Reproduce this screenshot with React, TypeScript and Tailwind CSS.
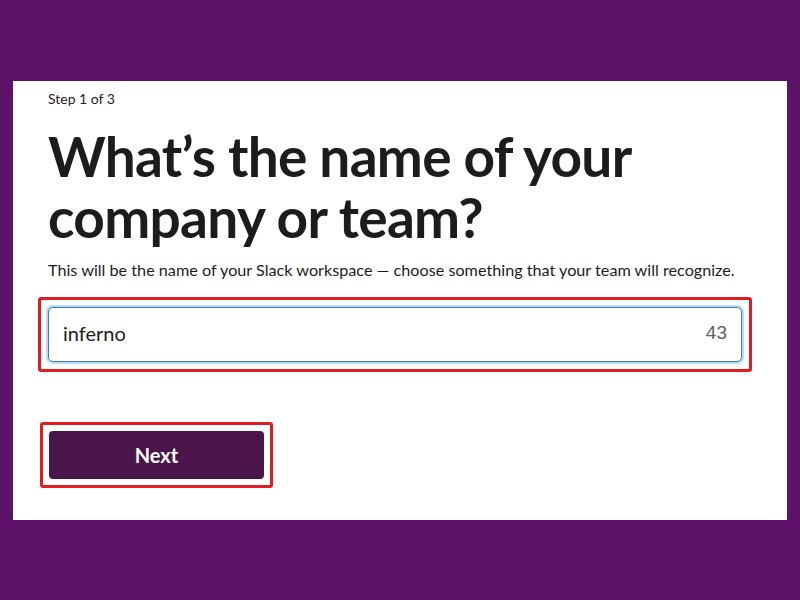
export default function App() {
  return (
    <div className="w-[800px] h-[600px] bg-[#5d1169] pt-[81px] px-[13px] font-['Lato',sans-serif]">
      <div className="w-[774px] h-[439px] bg-white pl-[35px] pr-[35px] pt-[9px] flex flex-col">
        <p className="text-[14px] leading-[18px] text-[#1d1c1d]">Step 1 of 3</p>
        <h1 className="mt-[18px] text-[55px] leading-[61px] font-bold tracking-[-0.7px] text-[#1d1c1d]">
          What’s the name of your company or team?
        </h1>
        <p className="mt-[12px] text-[16.2px] leading-[20px] text-[#1d1c1d]">
          This will be the name of your Slack workspace — choose something that your team will recognize.
        </p>
        {/* highlighted input */}
        <div className="mt-[17px] -ml-[10px] w-[714px] h-[75px] border-[3px] border-[#e31b23] rounded-[3px] p-[5px]">
          <div className="h-full rounded-[7px] border-[2px] border-[#b8dcf2] bg-[#cfe7f6]">
            <div className="h-full rounded-[5px] border border-[#3f7cb6] bg-white flex items-center justify-between px-[14px] pb-[3px]">
              <span className="text-[20px] text-[#1d1c1d]">inferno</span>
              <span className="text-[19px] text-[#616061] font-['Liberation_Sans',sans-serif]">43</span>
            </div>
          </div>
        </div>
        {/* highlighted button */}
        <div className="mt-[50px] -ml-[8px] w-[233px] h-[66px] border-[3px] border-[#e31b23] rounded-[3px] p-[6px]">
          <button
            type="button"
            className="w-full h-full rounded-[4px] bg-[#4a154b] text-white text-[20px] font-bold flex items-center justify-center"
          >
            Next
          </button>
        </div>
      </div>
    </div>
  );
}
